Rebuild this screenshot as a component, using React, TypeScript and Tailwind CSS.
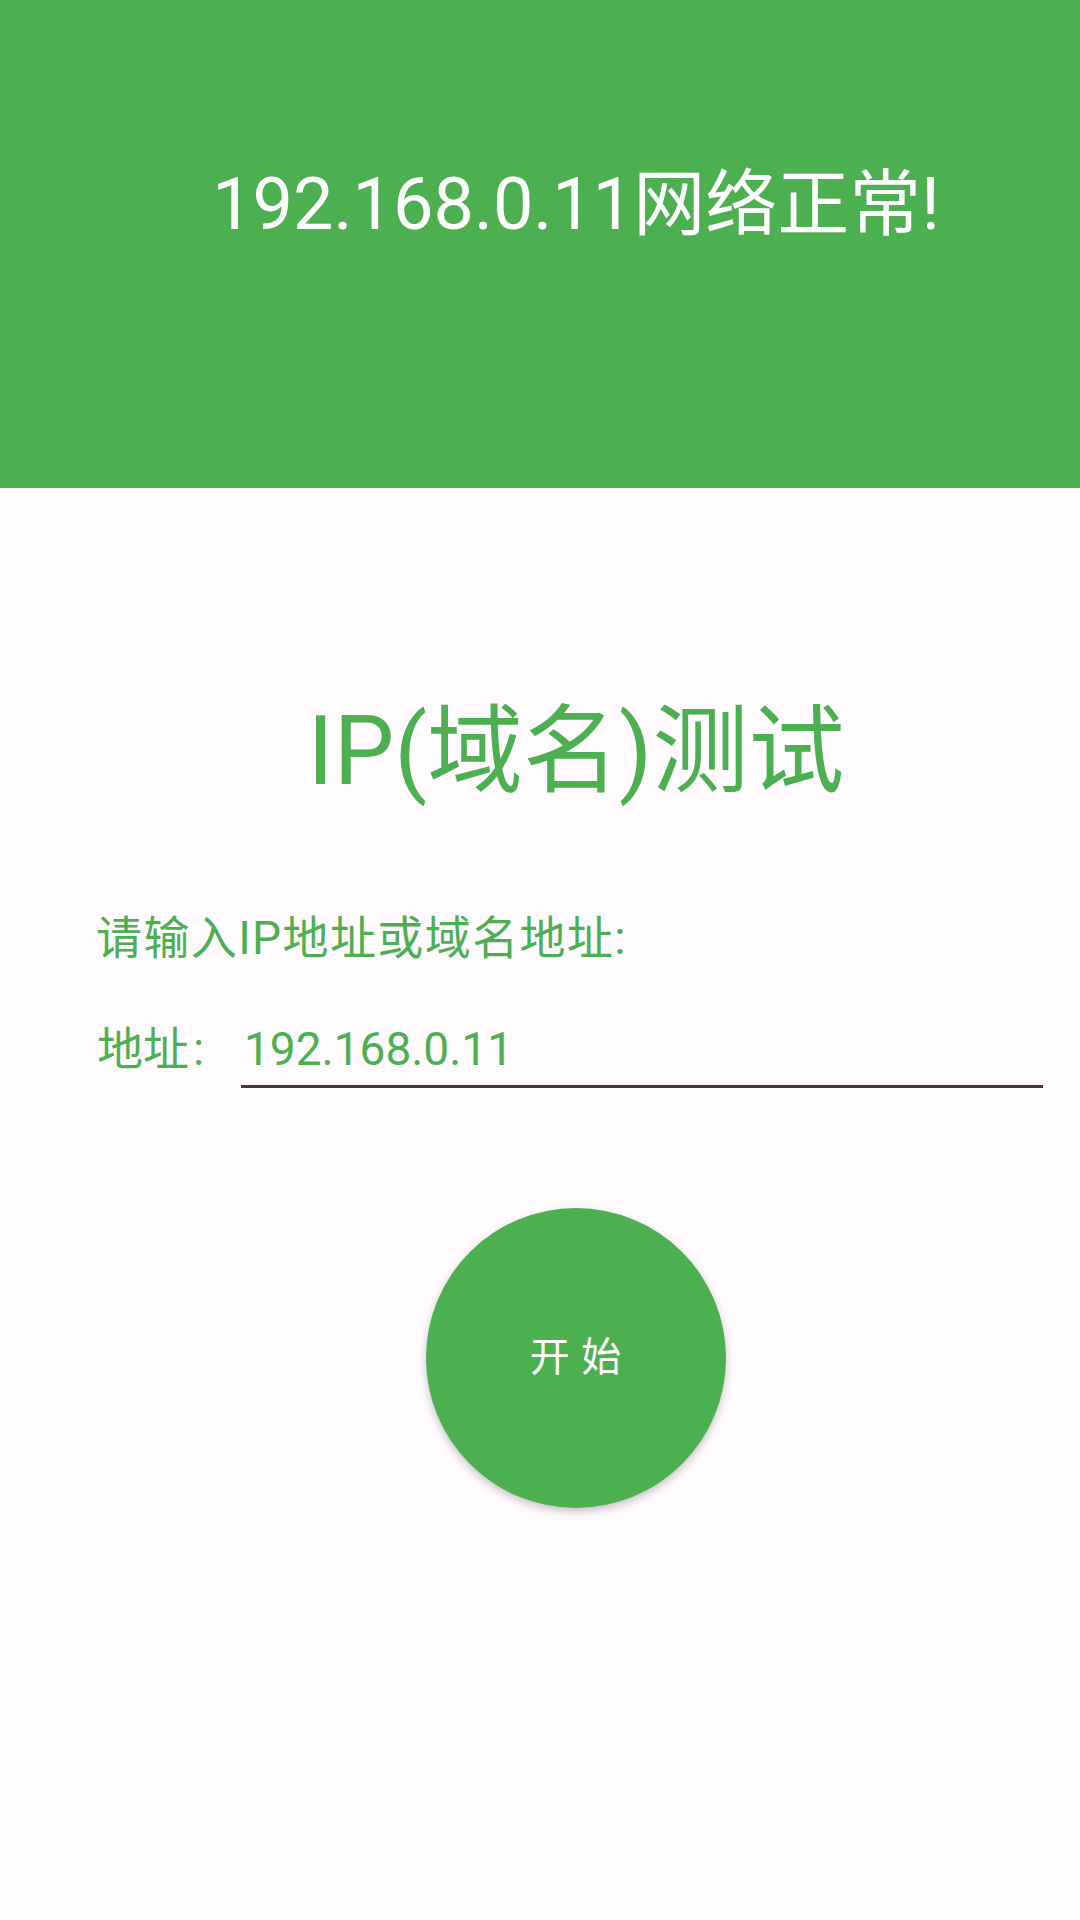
const font = { fontFamily: 'Roboto, "Noto Sans CJK SC", sans-serif' };

export default function App() {
  return (
    <div className="min-h-[1920px] w-[1080px] bg-[#FFFBFE] text-[#4CAF50]" style={font}>
      <header className="h-[488px] bg-[#4CAF50] pl-[72px] pt-[169px] text-center text-[72px] leading-[72px] text-white">
        192.168.0.11网络正常!
      </header>

      <h1 className="mt-[215px] pl-[72px] text-center text-[96px] leading-[96px] font-normal">
        IP(域名)测试
      </h1>

      <p className="mt-[116px] pl-[96px] text-[46px] leading-[46px] tracking-[1.4px]">请输入IP地址或域名地址:</p>

      <div className="mt-[65px] flex items-start pl-[97px] pr-[37px]">
        <span className="w-[144px] shrink-0 text-[46px] leading-[46px]">
          地址<span className="ml-[4px]">:</span>
        </span>
        <div className="flex-1 border-b-[3px] border-[#3d3d3d] pb-[13px] pl-[3px] text-[46px] leading-[46px]">
          192.168.0.11
        </div>
      </div>

      <div className="mt-[120px] flex justify-center pl-[72px]">
        <button className="flex h-[300px] w-[300px] items-center justify-center rounded-full bg-[#4CAF50] text-[40px] tracking-[0.02em] text-white shadow-[0_4px_10px_rgba(0,0,0,0.22)]">
          开 始
        </button>
      </div>
    </div>
  );
}
